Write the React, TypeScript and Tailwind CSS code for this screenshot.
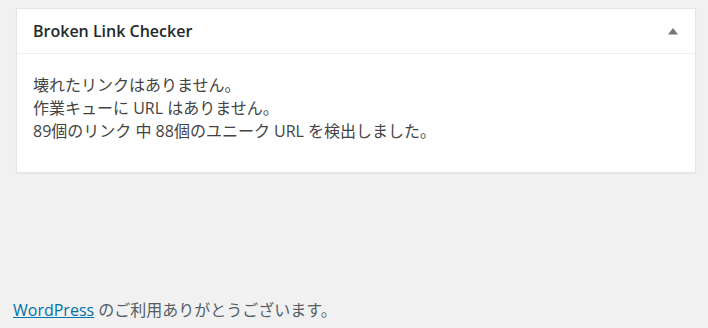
export default function App() {
  return (
    <div className="min-h-[328px] w-full bg-[#f1f1f1] pt-[8px] font-['Open_Sans','Noto_Sans_CJK_JP',sans-serif]">
      <div className="ml-[16px] w-[680px] border border-[#e5e5e5] bg-white shadow-[0_1px_1px_rgba(0,0,0,0.04)]">
        <div className="flex h-[45px] items-center justify-between border-b border-[#eeeeee] pl-[16px] pr-[16px]">
          <h2 className="text-[16px] font-semibold text-[#23282d]">Broken Link Checker</h2>
          <svg width="12" height="8" viewBox="0 0 12 8" className="mt-[-1px]">
            <path d="M1 7.5 L6 1 L11 7.5 Z" fill="#72777c" />
          </svg>
        </div>
        <div className="px-[16px] pt-[20px] pb-[29px] text-[16px] leading-[23px] text-[#444444]">
          <div>壊れたリンクはありません。</div>
          <div>作業キューに URL はありません。</div>
          <div>89個のリンク 中 88個のユニーク URL を検出しました。</div>
        </div>
      </div>
      <div className="mt-[126px] pl-[13px] text-[16px] leading-[23px] text-[#555d66]">
        <a href="#" className="text-[#0073aa] underline">WordPress</a> のご利用ありがとうございます。
      </div>
    </div>
  )
}
